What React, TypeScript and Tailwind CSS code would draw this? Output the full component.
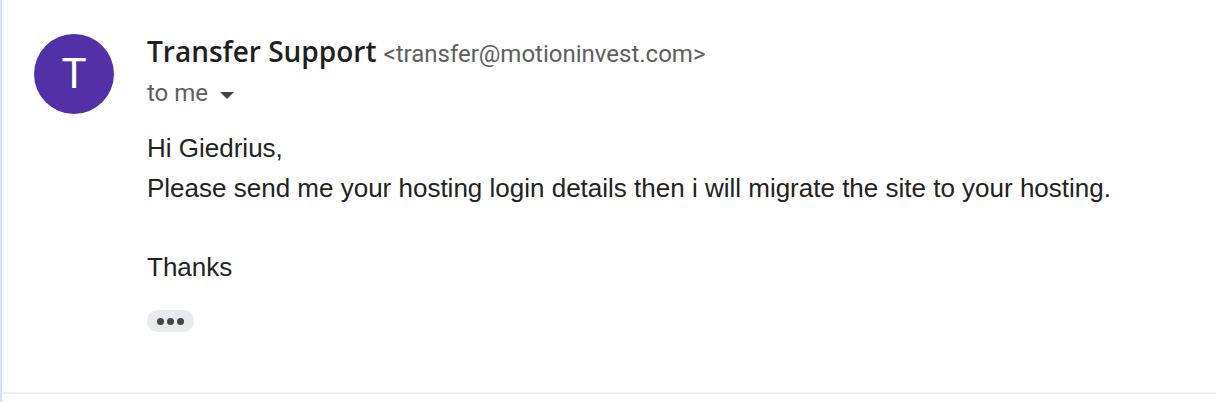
import React from 'react';

export default function App() {
  return (
    <div className="w-[1216px] h-[402px] bg-white border-l-2 border-[#d3e3fd] overflow-hidden">
      <div className="flex pl-[32px] pt-[34px] h-[394px] border-b-2 border-[#eceff1]">
        <div className="w-[80px] h-[80px] rounded-full bg-[#5230a6] flex items-center justify-center shrink-0">
          <span className="text-white text-[42px] font-['Roboto',sans-serif] font-normal leading-none">T</span>
        </div>
        <div className="ml-[33px] flex flex-col">
          <div className="flex items-baseline mt-[-1px] h-[36px] leading-[36px]">
            <span className="font-['Open_Sans',sans-serif] font-semibold text-[28px] text-[#1f1f1f]">Transfer Support</span>
            <span className="ml-[7px] font-['Roboto',sans-serif] text-[24px] text-[#5e5e5e]">&lt;transfer@motioninvest.com&gt;</span>
          </div>
          <div className="flex items-start h-[32px] mt-[8px]">
            <span className="font-['Roboto',sans-serif] text-[24px] leading-[32px] text-[#5e5e5e]">to me</span>
            <svg width="14" height="7" viewBox="0 0 14 7" className="ml-[12px] mt-[15px]">
              <path d="M0 0 L14 0 L7 7 Z" fill="#444746" />
            </svg>
          </div>
          <div className="mt-[20px] font-['Liberation_Sans',Arial,sans-serif] text-[26px] leading-[39.5px] text-[#222222]">
            <div>Hi Giedrius,</div>
            <div>Please send me your hosting login details then i will migrate the site to your hosting.</div>
            <div className="h-[39.5px]" />
            <div>Thanks</div>
          </div>
          <div className="mt-[23px] w-[47px] h-[22px] rounded-full bg-[#e8eaed] flex items-center justify-center gap-[3px]">
            <span className="w-[7px] h-[7px] rounded-full bg-[#444746]" />
            <span className="w-[7px] h-[7px] rounded-full bg-[#444746]" />
            <span className="w-[7px] h-[7px] rounded-full bg-[#444746]" />
          </div>
        </div>
      </div>
    </div>
  );
}
